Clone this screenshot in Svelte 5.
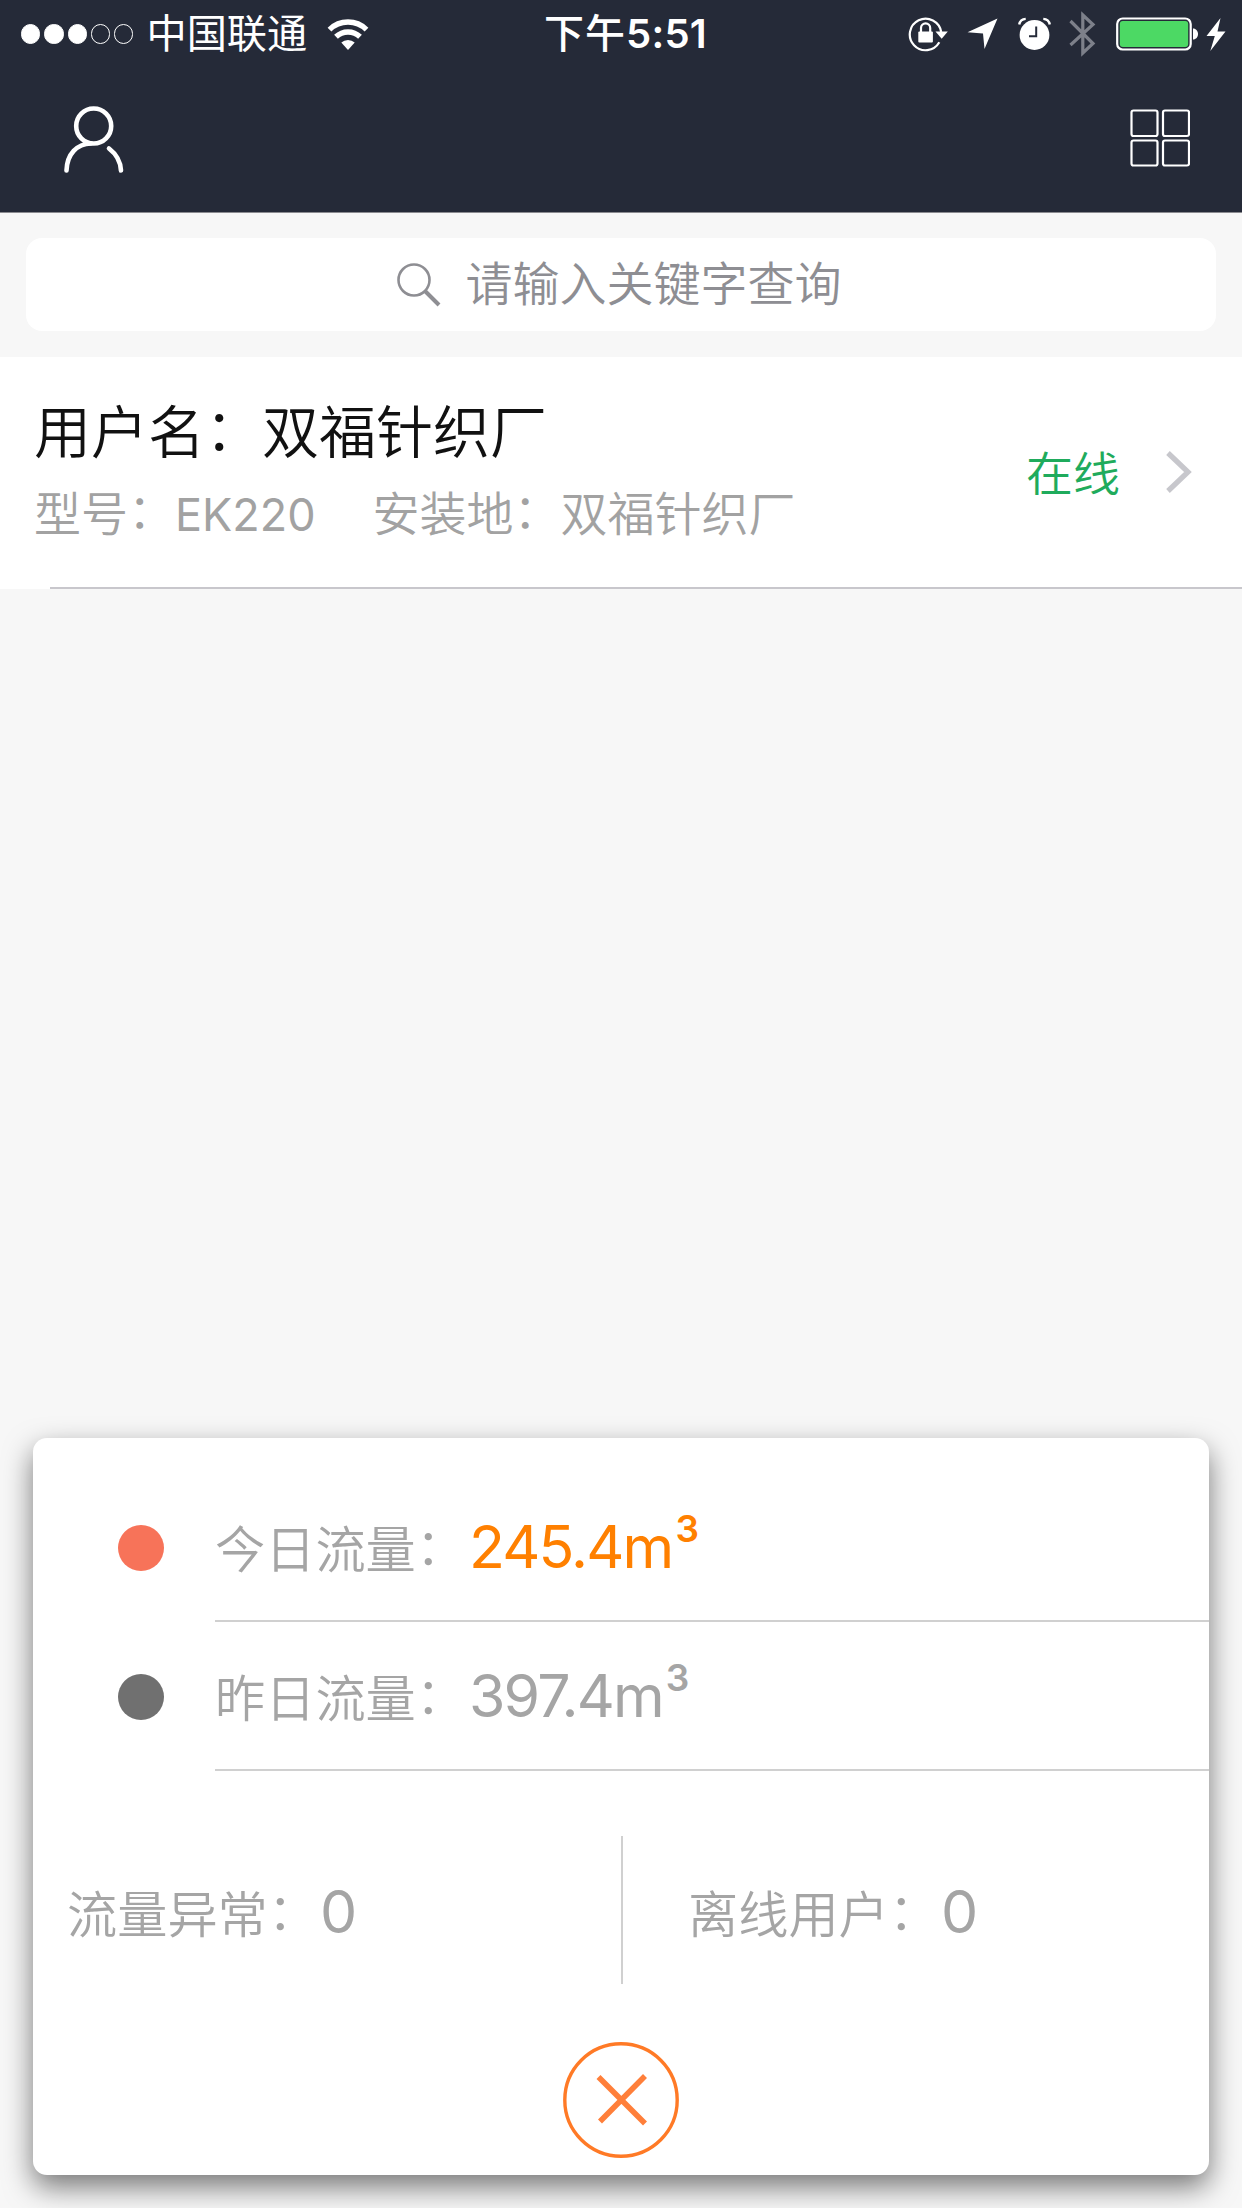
<script>
  const signal = [true, true, true, false, false];

  const users = [
    { name: '双福针织厂', model: 'EK220', place: '双福针织厂', status: '在线' }
  ];

  const flows = [
    { label: '今日流量', value: '245.4m', kind: 'today' },
    { label: '昨日流量', value: '397.4m', kind: 'yesterday' }
  ];

  const counts = [
    { label: '流量异常', value: 0 },
    { label: '离线用户', value: 0 }
  ];

  let panelOpen = $state(true);
</script>

<div class="screen">
  <header class="header">
    <div class="status-bar">
      <div class="carrier">
        <div class="signal">
          {#each signal as on}
            <i class:on></i>
          {/each}
        </div>
        <span class="carrier-name">中国联通</span>
        <svg class="wifi" width="42" height="33" viewBox="0 0 42 33">
          <g fill="none" stroke="#fff" stroke-width="5.4">
            <path d="M2.5 11.6a26.5 26.5 0 0 1 37 0" />
            <path d="M9 18.8a17.3 17.3 0 0 1 24 0" />
          </g>
          <path d="M14.3 24.6a9.8 9.8 0 0 1 13.4 0L21 32z" fill="#fff" />
        </svg>
      </div>
      <div class="time"><span>下午</span>5:51</div>
      <div class="indicators">
        <svg class="lock" width="40" height="36" viewBox="0 0 40 36">
          <path d="M31.3 26.3A15.8 15.8 0 1 1 33.2 16" fill="none" stroke="#fff" stroke-width="2.2" />
          <path d="M27.5 15.5h12.3l-6.1 7.2z" fill="#fff" />
          <rect x="10.3" y="15.5" width="14.6" height="11" rx="1" fill="#fff" />
          <path d="M13 16v-4a4.6 4.6 0 0 1 9.2 0v4" fill="none" stroke="#fff" stroke-width="2.2" />
        </svg>
        <svg class="location" width="31" height="32" viewBox="0 0 31 32">
          <path d="M30.5 0.5L17.5 31l-1.5-15.5L0.5 14.3z" fill="#fff" />
        </svg>
        <svg class="alarm" width="33" height="34" viewBox="0 0 33 34">
          <circle cx="16.5" cy="18" r="14.9" fill="#fff" />
          <path d="M1.2 7.5a7 7 0 0 1 6.5-5.6M25.3 1.9a7 7 0 0 1 6.5 5.6" fill="none" stroke="#fff" stroke-width="2.4" />
          <path d="M18.2 9.5V19.3H11" fill="none" stroke="#252a38" stroke-width="2" />
        </svg>
        <svg class="bluetooth" width="27" height="46" viewBox="0 0 27 46">
          <path d="M1.5 10L24 32.5 13.8 42V4L24 13.5 1.5 34" fill="none" stroke="#7d808a" stroke-width="3.2" />
        </svg>
        <svg class="battery" width="83" height="34" viewBox="0 0 83 34">
          <rect x="1.2" y="1.5" width="73.5" height="31" rx="5.5" fill="none" stroke="#fff" stroke-width="2.2" />
          <rect x="3.8" y="4" width="68.4" height="26" rx="3" fill="#4cd964" />
          <path d="M77 11.5c3 0 5 2.5 5 5.5s-2 5.5-5 5.5z" fill="#fff" />
        </svg>
        <svg class="bolt" width="20" height="33" viewBox="0 0 20 33">
          <path d="M14.5 0L0.5 18h8.3L4.3 33 19.5 13.5h-8z" fill="#fff" />
        </svg>
      </div>
    </div>
    <nav class="nav-bar">
      <button class="icon-btn" aria-label="user">
        <svg width="60" height="68" viewBox="0 0 60 68" fill="none" stroke="#fff" stroke-width="4.6" stroke-linecap="round">
          <circle cx="29.7" cy="20" r="17.5" />
          <path d="M2.5 64.5C3 48 13 37.8 27 37.5M45 42.5c7.2 5.5 11.5 13 12 22" />
        </svg>
      </button>
      <button class="icon-btn" aria-label="menu">
        <svg width="60" height="58" viewBox="0 0 60 58" fill="none" stroke="#fff" stroke-width="2.2">
          <rect x="1.5" y="1.5" width="26" height="25.5" rx="2" />
          <rect x="33" y="1.5" width="26" height="25.5" rx="2" />
          <rect x="1.5" y="31.5" width="26" height="25" rx="2" />
          <rect x="33" y="31.5" width="26" height="25" rx="2" />
        </svg>
      </button>
    </nav>
  </header>

  <div class="search-bar">
    <div class="search-field">
      <svg width="44" height="44" viewBox="0 0 44 44" fill="none" stroke="#8e8e93">
        <circle cx="17" cy="17" r="15.5" stroke-width="2.6" />
        <path d="M28 28l14 14" stroke-width="4" />
      </svg>
      <span>请输入关键字查询</span>
    </div>
  </div>

  <ul class="user-list">
    {#each users as user}
      <li class="user-row">
        <div class="user-info">
          <div class="user-name">用户名<i class="colon">：</i>{user.name}</div>
          <div class="user-meta">
            <span>型号<i class="colon">：</i><b>{user.model}</b></span>
            <span>安装地<i class="colon">：</i>{user.place}</span>
          </div>
        </div>
        <span class="user-status">{user.status}</span>
        <svg class="chevron" width="28" height="44" viewBox="0 0 28 44">
          <path d="M3 3l20 19L3 41" fill="none" stroke="#c7c7cc" stroke-width="5.2" />
        </svg>
      </li>
    {/each}
  </ul>

  {#if panelOpen}
    <section class="panel">
      {#each flows as flow}
        <div class="flow-row {flow.kind}">
          <i class="dot"></i>
          <div class="flow-text">
            <span class="label">{flow.label}<i class="colon">：</i></span>
            <span class="value">{flow.value}<sup>3</sup></span>
          </div>
        </div>
      {/each}
      <div class="counts">
        {#each counts as item}
          <div class="count">
            <span class="label">{item.label}<i class="colon">：</i></span>
            <span class="value">{item.value}</span>
          </div>
        {/each}
      </div>
      <button class="close" aria-label="close" onclick={() => (panelOpen = false)}>
        <svg width="116" height="116" viewBox="0 0 116 116" fill="none">
          <circle cx="58" cy="58" r="56.2" stroke="#ff7a26" stroke-width="3.4" />
          <path d="M35.5 35L82 81.5M82 34L37 79.5" stroke="#ff7f3a" stroke-width="5.6" />
        </svg>
      </button>
    </section>
  {/if}
</div>

<style>
  :global(body){background:#f7f7f7}
  .screen{box-sizing:border-box;width:1242px;height:2208px;display:flex;flex-direction:column;overflow:hidden;background:#f7f7f7;font-family:Inter,"Noto Sans CJK SC",sans-serif;font-weight:350;white-space:nowrap}
  svg{display:block;flex:none}
  button{padding:0;border:0;background:none}

  .header{box-sizing:border-box;height:213px;background:#252a38;border-bottom:1px solid #8b8b90;color:#fff}
  .status-bar{display:grid;grid-template-columns:1fr auto 1fr;align-items:center;height:68px;padding:0 16px 0 21px}
  .carrier{display:flex;align-items:center}
  .signal{display:flex;gap:4px}
  .signal i{box-sizing:border-box;width:19.3px;height:19.3px;border:1.5px solid #fff;border-radius:50%}
  .signal i.on{background:#fff}
  .carrier-name{margin-left:13px;font-size:40.2px;line-height:60px;font-weight:400}
  .wifi{margin-left:20px}
  .time{padding-left:4px;font-size:40px;line-height:60px;font-weight:600;letter-spacing:.2px}
  .time span{font-weight:500;letter-spacing:1px}
  .indicators{display:flex;align-items:center;justify-content:flex-end}
  .location{margin-left:19px}
  .alarm{margin-left:20px}
  .bluetooth{margin-left:18px}
  .battery{margin-left:20px}
  .bolt{margin-left:7px}
  .nav-bar{display:flex;justify-content:space-between;align-items:center;height:144px;padding:0 52px 0 64px}
  .icon-btn:last-child{margin-top:-5px}

  .search-bar{padding:25px 26px 26px}
  .search-field{box-sizing:border-box;display:flex;align-items:center;justify-content:center;gap:25px;height:93px;padding-right:4px;border-radius:16px;background:#fff;color:#8e8e93;font-size:47px}
  .search-field span{padding-bottom:8px}

  .user-list{margin:0;padding:0;list-style:none}
  .user-row{display:flex;align-items:center;height:232px;padding:0 49px 0 34px;background:linear-gradient(#c8c7cc,#c8c7cc) 50px 100%/100% 2px no-repeat #fff}
  .user-info{flex:1}
  .user-name{font-size:57px;line-height:82px;color:#111}
  .user-meta{display:flex;gap:57px;font-size:47px;line-height:79px;color:#a2a2a2}
  .user-meta b{font-weight:400;font-size:45px}
  .user-status{margin-right:45px;padding-bottom:5px;font-size:47px;color:#1fab5c}
  .chevron{margin-bottom:2px}
  /* full-width colon sits low in this family */
  .colon{display:inline-block;font-style:normal;line-height:0;vertical-align:3px}

  .panel{display:flex;flex-direction:column;width:1176px;height:737px;margin:auto 33px 33px;border-radius:14px;background:#fff;box-shadow:0 12px 29px rgba(0,0,0,.52);color:#a5a5a5}
  .label{font-size:50.2px}
  .value{font-size:59px;font-weight:400;letter-spacing:-1.8px}
  .flow-row{display:flex;align-items:center;height:149px;padding-left:85px}
  .flow-row:first-child{padding-top:35px}
  .dot{width:46px;height:46px;border-radius:50%;background:#707070}
  .today .dot{background:#f77359}
  .flow-text{box-sizing:border-box;display:flex;align-items:baseline;flex:1;height:149px;margin-left:51px;border-bottom:2px solid #d0d0d0;line-height:148px}
  .flow-text .value{margin-left:3px}
  .today .value{color:#ff8000}
  sup{margin-left:3px;font-size:37px;font-weight:600;line-height:0;vertical-align:26px}
  .counts{display:grid;grid-template-columns:1fr 1fr;height:148px;margin-top:65px}
  .count{box-sizing:border-box;display:flex;align-items:baseline;height:148px;padding:1px 0 0 34px;line-height:150px}
  .count + .count{border-left:2px solid #d0d0d0;padding-left:65px}
  .count .value{margin-left:2px}
  .close{align-self:center;margin-top:58px}
</style>
